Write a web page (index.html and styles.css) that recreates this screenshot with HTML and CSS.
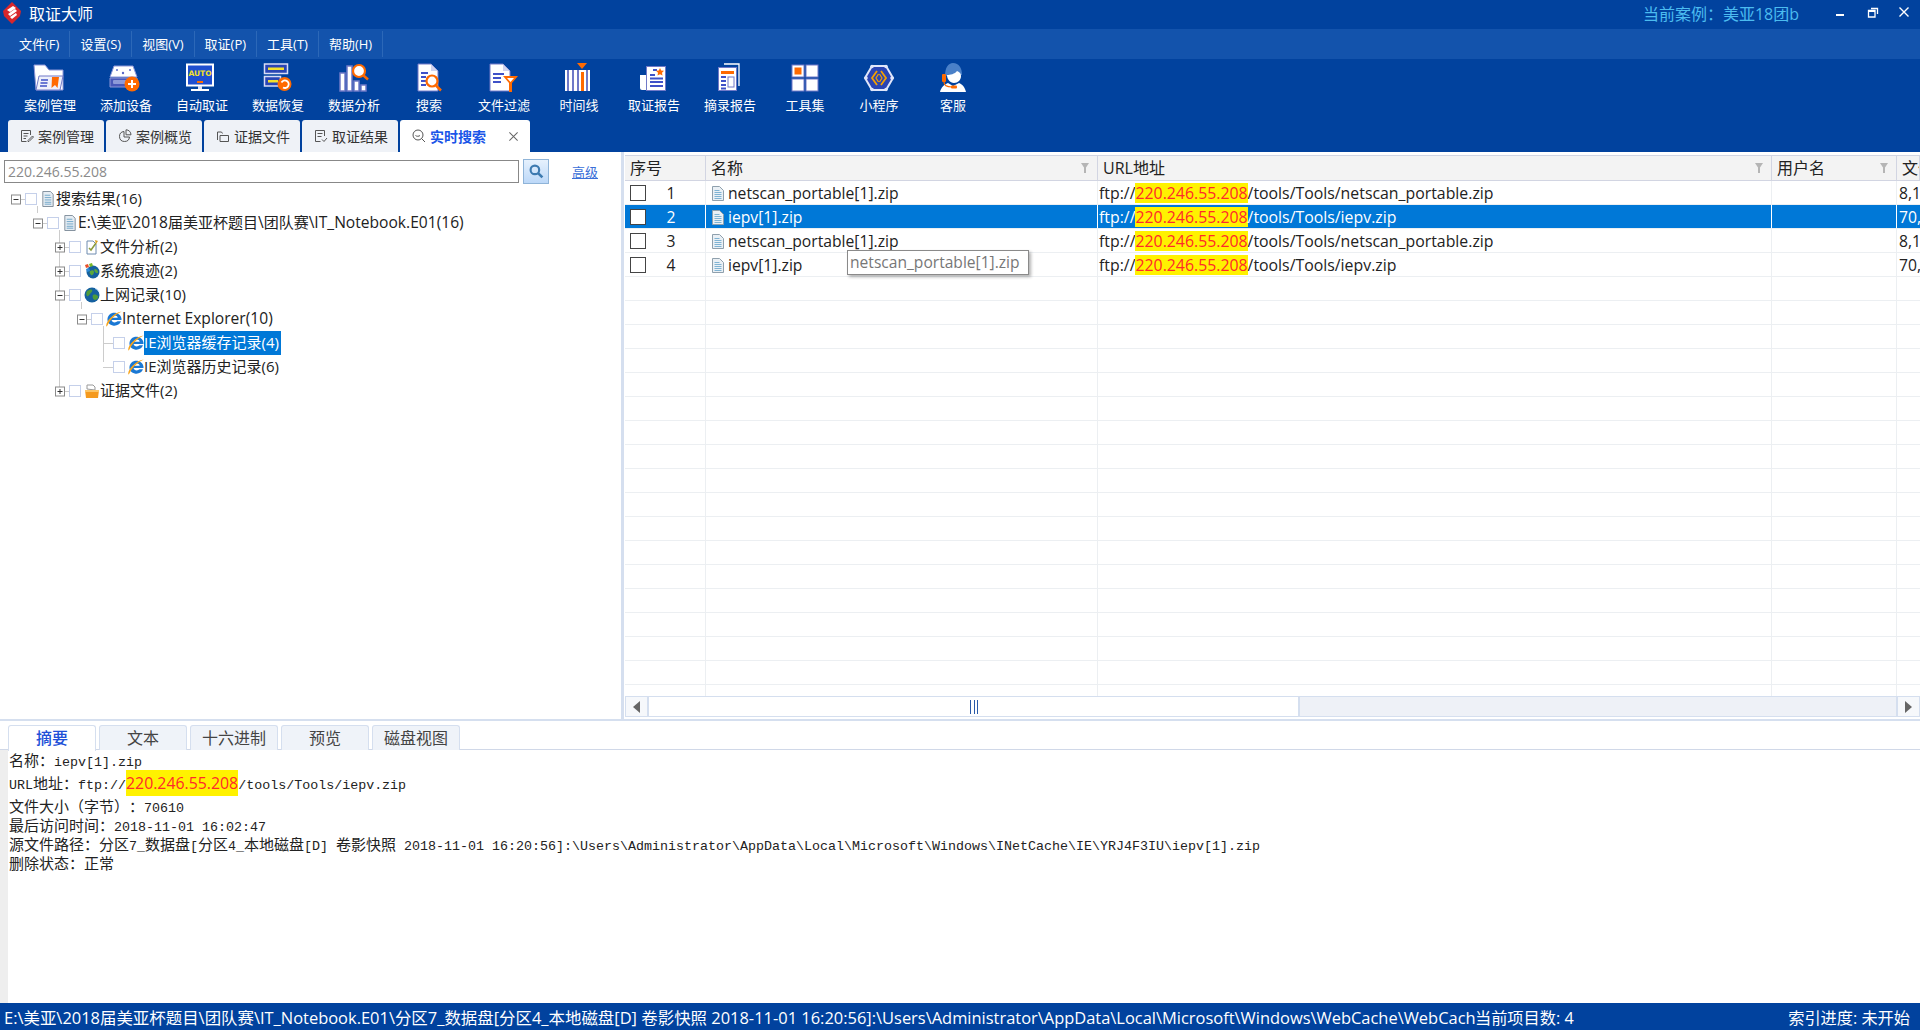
FILE: index.html
```html
<!DOCTYPE html>
<html lang="zh-CN">
<head>
<meta charset="utf-8">
<title>取证大师</title>
<link rel="stylesheet" href="styles.css">
</head>
<body>
<svg class="defs" width="0" height="0">
  <symbol id="minus" viewBox="0 0 14 15"><rect x=".5" y="3" width="9" height="9" fill="#fff" stroke="#8a8a8a"/><path d="M2.500 7.500h5" stroke="#333"/><path d="M10 7.500h4" stroke="#ccc"/></symbol>
  <symbol id="plus" viewBox="0 0 14 15"><rect x=".5" y="3" width="9" height="9" fill="#fff" stroke="#8a8a8a"/><path d="M2.500 7.500h5M5 5v5" stroke="#333"/><path d="M10 7.500h4" stroke="#ccc"/></symbol>
  <symbol id="leaf" viewBox="0 0 14 15"><path d="M4 7.500h10" stroke="#ccc"/></symbol>
  <symbol id="doc" viewBox="0 0 14 17"><path d="M1.500 .5h8l3 3v13h-11z" fill="#e6edf3" stroke="#7d8b99"/><path d="M3.500 4.500h6M3.500 7h7M3.500 9.500h7M3.500 12h7M3.500 14h7" stroke="#6fa5c8"/></symbol>
  <symbol id="ie" viewBox="0 0 16 16"><path d="M15.500 9H5.600c.3 2.500 3.700 3.300 6 1.300h3.400c-1.300 3.400-4.800 5-8.300 4.200C3 13.700.8 10.500 1.600 7 2.400 3.200 6 1 9.500 1.800c3.700.8 6.300 3.500 6 7.200zM5.700 6.700h6C11.400 3.900 6.200 3.900 5.700 6.700z" fill="#1a78d4"/><path d="M.4 15.600C-1 12 6.500 1.800 15.800.5c-6.500 2.800-11.600 8.500-13.600 12.500-.5 1.100-1 2.100-1.800 2.600z" fill="#f7a41c"/></symbol>
  <symbol id="globe" viewBox="0 0 16 16"><circle cx="8" cy="8" r="7.500" fill="#15609f"/><path d="M3 4c2-1 4-2 5-1s-1 3-2 4-2 3-3 2-1-3 0-5zM9 8c2-1 4 0 5 1s-1 4-3 4-3-4-2-5z" fill="#4f9c3a"/><path d="M11 1.500c2 .5 3.500 2 4 3.500" stroke="#bfe2ff" fill="none"/></symbol>
  <symbol id="sys" viewBox="0 0 16 16"><circle cx="9" cy="9" r="6.500" fill="#15609f"/><path d="M6 8c2-1 4-1 4 1s-2 4-3 3-2-3-1-4zM11 6c1 0 3 1 3 3s-2 1-3 0-1-3 0-3z" fill="#5aa83c"/><path d="M1 2l3-1 1 3-3 1z" fill="#e8502a"/><path d="M5 1l3-1 1 3-3 1z" fill="#78b828"/><path d="M2 6l3-1 1 3-3 1z" fill="#2a8ad8"/></symbol>
  <symbol id="file" viewBox="0 0 12 15"><path d="M.5.500h7l4 4v10H.500z" fill="#eaf0f5" stroke="#8fa0ad"/><path d="M2.500 4.500h5M2.500 6.500h7M2.500 8.500h7M2.500 10.500h7M2.500 12.500h7" stroke="#7fb3d3"/></symbol>
  <symbol id="funnel" viewBox="0 0 8 10"><path d="M0 0h8L5 4.500V10H3V4.500z" fill="#b5b5b5"/></symbol>
</svg>

<header class="titlebar">
  <svg class="logo" viewBox="0 0 18 22"><path d="M9 0l9 9-1 5-8 8-8-8-1-5z" fill="#d8262c"/><path d="M4 8l6-4 3 2-6 4zM5 12l7-5 2 2-7 5zM7 15l6-4 1 2-5 4z" fill="#fff"/></svg>
  <span class="apptitle">取证大师</span>
  <span class="spacer"></span>
  <span class="casename">当前案例：美亚18团b</span>
  <svg class="winbtn" viewBox="0 0 12 12"><path d="M2 9h8" stroke="#fff" stroke-width="2"/></svg>
  <svg class="winbtn restore" viewBox="0 0 12 12"><path d="M4 2.500h6.500V8M1.500 4.500h6.500v6.500H1.500z" fill="none" stroke="#fff" stroke-width="1.300"/><path d="M1.500 5h6.500" stroke="#fff" stroke-width="2"/></svg>
  <svg class="winbtn" viewBox="0 0 12 12"><path d="M1.500 1.500l9 9M10.500 1.500l-9 9" stroke="#fff" stroke-width="1.400"/></svg>
</header>

<nav class="menubar">
  <span class="menu">文件(F)</span><span class="menu">设置(S)</span><span class="menu">视图(V)</span><span class="menu">取证(P)</span><span class="menu">工具(T)</span><span class="menu">帮助(H)</span>
</nav>

<section class="toolbar">
  <div class="tool nudge"><svg viewBox="0 0 34 30"><path d="M3 2h11l4 5h14v20H5z" fill="#fff" stroke="#8d96d8"/><path d="M8 13h24l-3 14H5z" fill="#eef0fb" stroke="#7079c8"/><path d="M10 17h7M9.500 20h7M9 23h7" stroke="#3f51c8" stroke-width="1.600"/><path d="M21 14h7l-1.500 11-2.500-3-3.500 3z" fill="#ff6a00"/></svg><span>案例管理</span></div>
  <div class="tool nudge"><svg viewBox="0 0 34 30"><path d="M7 3h19l4 11H3z" fill="#fff" stroke="#8d96d8"/><circle cx="10" cy="7" r="1" fill="#5a68c8"/><circle cx="23" cy="7" r="1" fill="#5a68c8"/><circle cx="16" cy="10" r="1.200" fill="#5a68c8"/><path d="M3 15h27v9H3z" fill="#4a58b8" stroke="#8d96d8"/><rect x="6" y="17" width="14" height="4" rx="1" fill="#8e9ad8"/><circle cx="25" cy="21" r="7.500" fill="#ff6a00"/><path d="M25 17v8M21 21h8" stroke="#fff" stroke-width="2"/></svg><span>添加设备</span></div>
  <div class="tool nudge"><svg viewBox="0 0 34 30"><rect x="4" y="1.500" width="26" height="21" fill="#1e4fd0" stroke="#fff" stroke-width="2"/><text class="autotxt" x="17" y="13" text-anchor="middle">AUTO</text><rect x="14" y="18" width="6" height="2" fill="#ff6a00"/><path d="M15 23h4v3h-4z" fill="#dfe3f7"/><path d="M8 27h18" stroke="#fff" stroke-width="2"/></svg><span>自动取证</span></div>
  <div class="tool"><svg viewBox="0 0 34 30"><rect x="3.500" y="1" width="23" height="9.500" fill="#2a45b5" stroke="#d8dcf5" stroke-width="1.500"/><rect x="7" y="4.500" width="16" height="2.500" fill="#f4e12a"/><rect x="3.500" y="13.500" width="16" height="9.500" fill="#2a45b5" stroke="#d8dcf5" stroke-width="1.500"/><rect x="7" y="17" width="10" height="2.500" fill="#f4e12a"/><circle cx="23.500" cy="21" r="7" fill="#ff6a00"/><path d="M20.500 19.500a3.800 3.800 0 1 1 1.500 5" fill="none" stroke="#fff" stroke-width="1.800"/></svg><span>数据恢复</span></div>
  <div class="tool"><svg viewBox="0 0 34 30"><rect x="3" y="10" width="5" height="18" fill="#fff" stroke="#6f79c8" stroke-width="1.500"/><rect x="10" y="3" width="5" height="25" fill="#fff" stroke="#6f79c8" stroke-width="1.500"/><rect x="17" y="18" width="5" height="10" fill="#fff" stroke="#6f79c8" stroke-width="1.500"/><rect x="24" y="22" width="5" height="6" fill="#fff" stroke="#6f79c8" stroke-width="1.500"/><circle cx="22" cy="8" r="6" fill="#fff" stroke="#ff6a00" stroke-width="2.200"/><path d="M26.500 12.500l4.500 4" stroke="#ff6a00" stroke-width="2.500"/></svg><span>数据分析</span></div>
  <div class="tool narrow"><svg viewBox="0 0 34 30"><path d="M6 1h13l7 7v20H6z" fill="#fff" stroke="#7079c8"/><path d="M19 1v7h7z" fill="#cfd3f0"/><path d="M9 10h7M9 14h5M9 18h5M9 22h5" stroke="#3f51c8" stroke-width="1.800"/><circle cx="20" cy="18" r="5.500" fill="#fff" stroke="#ff6a00" stroke-width="2.200"/><path d="M24 22.500l5 5" stroke="#ff6a00" stroke-width="2.500"/></svg><span>搜索</span></div>
  <div class="tool"><svg viewBox="0 0 34 30"><path d="M3 1h13l7 7v20H3z" fill="#fff" stroke="#7079c8"/><path d="M16 1v7h7z" fill="#cfd3f0"/><path d="M6 11h11M6 15h8M6 19h8" stroke="#3f51c8" stroke-width="1.800"/><path d="M16 13h15l-6 7v9h-3v-9z" fill="#ff6a00"/><path d="M20 15h7l-3.500 4z" fill="#fff"/></svg><span>文件过滤</span></div>
  <div class="tool narrow nudge"><svg viewBox="0 0 34 30"><rect x="5" y="7" width="25" height="21" fill="#fff"/><path d="M8 7v21M13 7v21M18 7v21M27 7v21" stroke="#6f79c8" stroke-width="2"/><path d="M21 9h3v19h-3" fill="#ff6a00"/><path d="M17 0h10l-5 6z" fill="#ff6a00"/></svg><span>时间线</span></div>
  <div class="tool"><svg viewBox="0 0 34 30"><path d="M3 12h6v15H5a2 2 0 0 1-2-2z" fill="#fff"/><rect x="9.500" y="3.500" width="19" height="24" fill="#fff" stroke="#7079c8"/><path d="M16 7h4M13 12h5M13 15.500h13M13 19h13M13 23h13" stroke="#3f51c8" stroke-width="2"/><path d="M23 5l1.200 2.500 2.800.3-2 2 .5 2.700-2.500-1.300-2.500 1.300.5-2.700-2-2 2.800-.3z" fill="#ff6a00"/></svg><span>取证报告</span></div>
  <div class="tool"><svg viewBox="0 0 34 30"><path d="M11 1h15v22" fill="none" stroke="#fff" stroke-width="1.300"/><rect x="5.500" y="4.500" width="18" height="23" fill="#fff" stroke="#7079c8"/><rect x="8" y="8" width="13" height="3" fill="#ff6a00"/><path d="M8 14h5M8 18h5M8 22h5M8 25.500h5" stroke="#3f51c8" stroke-width="2"/><rect x="15" y="14" width="6" height="10" fill="#fff" stroke="#7079c8"/></svg><span>摘录报告</span></div>
  <div class="tool narrow"><svg viewBox="0 0 34 30"><rect x="4" y="2" width="12" height="12" fill="#fff" stroke="#7079c8"/><rect x="6.500" y="4.500" width="7" height="7" fill="#ff6a00"/><rect x="18" y="2" width="12" height="12" fill="#fff" stroke="#7079c8"/><rect x="4" y="16" width="12" height="12" fill="#fff" stroke="#7079c8"/><rect x="18" y="16" width="12" height="12" fill="#fff" stroke="#7079c8"/></svg><span>工具集</span></div>
  <div class="tool narrow"><svg viewBox="0 0 34 30"><path d="M10 3h14l7 12-7 12H10L3 15z" fill="#2a45b5" stroke="#dfe6fa" stroke-width="2"/><circle cx="4" cy="15" r="1.800" fill="#dfe6fa"/><circle cx="30" cy="15" r="1.800" fill="#dfe6fa"/><circle cx="10" cy="3.500" r="1.800" fill="#dfe6fa"/><circle cx="24" cy="3.500" r="1.800" fill="#dfe6fa"/><circle cx="10" cy="26.500" r="1.800" fill="#dfe6fa"/><circle cx="24" cy="26.500" r="1.800" fill="#dfe6fa"/><path d="M15 8l-5 7 5 7M19 8l5 7-5 7" fill="none" stroke="#f5a000" stroke-width="1.800"/><path d="M16.500 11l-2.500 4 2.500 4M17.500 11l2.500 4-2.500 4" fill="none" stroke="#f5a000" stroke-width="1.200"/></svg><span>小程序</span></div>
  <div class="tool narrow"><svg viewBox="0 0 34 30"><path d="M9 13C9 5 12 0 17 0c6 0 9 5 9 12z" fill="#4a80c8"/><path d="M11 12c3 0 8-1 10-4 2 1 4 2 4 5 0 4-3 7-7 7s-7-4-7-8z" fill="#fff"/><path d="M4 29c1-5 5-8 8-9l5 3 6-3c3 1 6 4 7 9z" fill="#fff"/><rect x="6" y="11" width="4" height="8" rx="1" fill="#ff6a00"/><path d="M8 19c0 3 3 5 8 5" fill="none" stroke="#ff6a00" stroke-width="1.200"/><rect x="15" y="22.500" width="6" height="3" rx="1" fill="#ff6a00"/></svg><span>客服</span></div>
</section>

<nav class="tabs">
  <div class="tab"><svg viewBox="0 0 14 14"><path d="M10.500 6V1.500h-9v11h5M3.500 4.500h5M3.500 7h4M3.500 9.500h2.500M8 11.500l4.500-4.500 1 1L9 12.500H8z" fill="none" stroke="#555"/></svg>案例管理</div>
  <div class="tab"><svg viewBox="0 0 14 14"><path d="M6 2.500a5 5 0 1 0 5.500 5.500H6zM8 .8v5h5a5 5 0 0 0-5-5z" fill="none" stroke="#555"/></svg>案例概览</div>
  <div class="tab"><svg viewBox="0 0 14 14"><path d="M1.500 11V3h4l1 1.500M4 12.500V6.500h8.500v6z" fill="none" stroke="#555"/></svg>证据文件</div>
  <div class="tab"><svg viewBox="0 0 14 14"><path d="M10.500 7V1.500h-9v11h5M3.500 4.500h5M3.500 7.500h4M8 10.500l2 2 3-3.500" fill="none" stroke="#555"/></svg>取证结果</div>
  <div class="tab active"><svg viewBox="0 0 14 14"><circle cx="6" cy="6" r="5" fill="none" stroke="#555"/><path d="M3.500 6.500c1 1 3.500 1 4.500 0M9.500 9.500l3.500 3.500" fill="none" stroke="#555"/></svg><span class="tabtext">实时搜索</span><svg class="tabclose" viewBox="0 0 12 12"><path d="M1.500 1.500l9 9M10.500 1.500l-9 9" stroke="#666" stroke-width="1.100"/></svg></div>
</nav>

<main class="main">
  <aside class="leftpane">
    <div class="searchrow">
      <div class="searchinput">220.246.55.208</div>
      <div class="searchbtn"><svg viewBox="0 0 14 14"><circle cx="5.500" cy="5.500" r="4" fill="none" stroke="#3d7ab0" stroke-width="2"/><path d="M8.500 8.500l4 4" stroke="#3d7ab0" stroke-width="2.400"/></svg></div>
      <a class="advlink">高级</a>
    </div>
    <div class="tree">
      <i class="vline v1"></i><i class="vline v2"></i><i class="vline v3"></i><i class="vline v4"></i>
      <div class="node l0"><svg class="exp"><use href="#minus"/></svg><i class="chk"></i><svg class="nicon"><use href="#doc"/></svg><span class="ntext">搜索结果(16)</span></div>
      <div class="node l1"><svg class="exp"><use href="#minus"/></svg><i class="chk"></i><svg class="nicon"><use href="#doc"/></svg><span class="ntext"><span class="lat">E:\</span>美亚<span class="lat">\2018</span>届美亚杯题目<span class="lat">\</span>团队赛<span class="lat">\IT_Notebook.E01(16)</span></span></div>
      <div class="node l2"><svg class="exp"><use href="#plus"/></svg><i class="chk"></i><svg class="nicon" viewBox="0 0 16 16"><path d="M3 2h6l3 3v10H3z" fill="#fff" stroke="#6f8cb0"/><path d="M5 9l2 2 5-7" fill="none" stroke="#8a9a3c" stroke-width="1.500"/><path d="M11 1l3 1-2 3z" fill="#d8a020"/></svg><span class="ntext">文件分析(2)</span></div>
      <div class="node l2"><svg class="exp"><use href="#plus"/></svg><i class="chk"></i><svg class="nicon"><use href="#sys"/></svg><span class="ntext">系统痕迹(2)</span></div>
      <div class="node l2"><svg class="exp"><use href="#minus"/></svg><i class="chk"></i><svg class="nicon"><use href="#globe"/></svg><span class="ntext">上网记录(10)</span></div>
      <div class="node l3"><svg class="exp"><use href="#minus"/></svg><i class="chk"></i><svg class="nicon"><use href="#ie"/></svg><span class="ntext"><span class="lat">Internet Explorer(10)</span></span></div>
      <div class="node l4"><svg class="exp"><use href="#leaf"/></svg><i class="chk"></i><svg class="nicon"><use href="#ie"/></svg><span class="ntext sel">IE浏览器缓存记录(4)</span></div>
      <div class="node l4"><svg class="exp"><use href="#leaf"/></svg><i class="chk"></i><svg class="nicon"><use href="#ie"/></svg><span class="ntext">IE浏览器历史记录(6)</span></div>
      <div class="node l2"><svg class="exp"><use href="#plus"/></svg><i class="chk"></i><svg class="nicon" viewBox="0 0 16 16"><path d="M3 6V2h6l2 2v3z" fill="#fff" stroke="#999"/><path d="M1 7h14l-1 8H2z" fill="#f59a1e"/><path d="M1 7h14v2H1z" fill="#fcc566"/></svg><span class="ntext">证据文件(2)</span></div>
    </div>
  </aside>
  <div class="splitter"></div>
  <section class="rightpane">
    <div class="grid head">
      <div class="cell">序号</div>
      <div class="cell">名称<svg class="filter"><use href="#funnel"/></svg></div>
      <div class="cell">URL地址<svg class="filter"><use href="#funnel"/></svg></div>
      <div class="cell">用户名<svg class="filter"><use href="#funnel"/></svg></div>
      <div class="cell">文件</div>
    </div>
    <div class="rows">
      <div class="grid row"><div class="cell seq"><i class="box"></i><b>1</b></div><div class="cell"><svg class="ficon"><use href="#file"/></svg>netscan_portable[1].zip</div><div class="cell url">ftp://<mark>220.246.55.208</mark>/tools/Tools/netscan_portable.zip</div><div class="cell"></div><div class="cell">8,1</div></div>
      <div class="grid row selected"><div class="cell seq"><i class="box"></i><b>2</b></div><div class="cell"><svg class="ficon"><use href="#file"/></svg>iepv[1].zip</div><div class="cell url">ftp://<mark>220.246.55.208</mark>/tools/Tools/iepv.zip</div><div class="cell"></div><div class="cell">70,</div></div>
      <div class="grid row"><div class="cell seq"><i class="box"></i><b>3</b></div><div class="cell"><svg class="ficon"><use href="#file"/></svg>netscan_portable[1].zip</div><div class="cell url">ftp://<mark>220.246.55.208</mark>/tools/Tools/netscan_portable.zip</div><div class="cell"></div><div class="cell">8,1</div></div>
      <div class="grid row"><div class="cell seq"><i class="box"></i><b>4</b></div><div class="cell"><svg class="ficon"><use href="#file"/></svg>iepv[1].zip</div><div class="cell url">ftp://<mark>220.246.55.208</mark>/tools/Tools/iepv.zip</div><div class="cell"></div><div class="cell">70,</div></div>
      <div class="grid row"><div class="cell"></div><div class="cell"></div><div class="cell"></div><div class="cell"></div><div class="cell"></div></div>
      <div class="grid row"><div class="cell"></div><div class="cell"></div><div class="cell"></div><div class="cell"></div><div class="cell"></div></div>
      <div class="grid row"><div class="cell"></div><div class="cell"></div><div class="cell"></div><div class="cell"></div><div class="cell"></div></div>
      <div class="grid row"><div class="cell"></div><div class="cell"></div><div class="cell"></div><div class="cell"></div><div class="cell"></div></div>
      <div class="grid row"><div class="cell"></div><div class="cell"></div><div class="cell"></div><div class="cell"></div><div class="cell"></div></div>
      <div class="grid row"><div class="cell"></div><div class="cell"></div><div class="cell"></div><div class="cell"></div><div class="cell"></div></div>
      <div class="grid row"><div class="cell"></div><div class="cell"></div><div class="cell"></div><div class="cell"></div><div class="cell"></div></div>
      <div class="grid row"><div class="cell"></div><div class="cell"></div><div class="cell"></div><div class="cell"></div><div class="cell"></div></div>
      <div class="grid row"><div class="cell"></div><div class="cell"></div><div class="cell"></div><div class="cell"></div><div class="cell"></div></div>
      <div class="grid row"><div class="cell"></div><div class="cell"></div><div class="cell"></div><div class="cell"></div><div class="cell"></div></div>
      <div class="grid row"><div class="cell"></div><div class="cell"></div><div class="cell"></div><div class="cell"></div><div class="cell"></div></div>
      <div class="grid row"><div class="cell"></div><div class="cell"></div><div class="cell"></div><div class="cell"></div><div class="cell"></div></div>
      <div class="grid row"><div class="cell"></div><div class="cell"></div><div class="cell"></div><div class="cell"></div><div class="cell"></div></div>
      <div class="grid row"><div class="cell"></div><div class="cell"></div><div class="cell"></div><div class="cell"></div><div class="cell"></div></div>
      <div class="grid row"><div class="cell"></div><div class="cell"></div><div class="cell"></div><div class="cell"></div><div class="cell"></div></div>
      <div class="grid row"><div class="cell"></div><div class="cell"></div><div class="cell"></div><div class="cell"></div><div class="cell"></div></div>
      <div class="grid row"><div class="cell"></div><div class="cell"></div><div class="cell"></div><div class="cell"></div><div class="cell"></div></div>
      <div class="grid row"><div class="cell"></div><div class="cell"></div><div class="cell"></div><div class="cell"></div><div class="cell"></div></div>
    </div>
    <div class="hscroll">
      <div class="sbtn"><i class="arrow-l"></i></div>
      <div class="thumb"><i class="grip"></i></div>
      <div class="track"></div>
      <div class="sbtn"><i class="arrow-r"></i></div>
    </div>
    <div class="tooltip">netscan_portable[1].zip</div>
  </section>
</main>

<section class="bottom">
  <nav class="btabs">
    <div class="btab active">摘要</div><div class="btab">文本</div><div class="btab">十六进制</div><div class="btab">预览</div><div class="btab">磁盘视图</div>
  </nav>
  <div class="summary">
    <p class="sline"><span class="zh">名称：</span>iepv[1].zip</p>
    <p class="sline hl">URL<span class="zh">地址：</span>ftp://<mark>220.246.55.208</mark>/tools/Tools/iepv.zip</p>
    <p class="sline"><span class="zh">文件大小（字节）：</span>70610</p>
    <p class="sline"><span class="zh">最后访问时间：</span>2018-11-01 16:02:47</p>
    <p class="sline"><span class="zh">源文件路径：分区</span>7_<span class="zh">数据盘</span>[<span class="zh">分区</span>4_<span class="zh">本地磁盘</span>[D] <span class="zh">卷影快照</span> 2018-11-01 16:20:56]:\Users\Administrator\AppData\Local\Microsoft\Windows\INetCache\IE\YRJ4F3IU\iepv[1].zip</p>
    <p class="sline"><span class="zh">删除状态：正常</span></p>
  </div>
</section>

<footer class="statusbar">
  <span class="path">E:\美亚\2018届美亚杯题目\团队赛\IT_Notebook.E01\分区7_数据盘[分区4_本地磁盘[D] 卷影快照 2018-11-01 16:20:56]:\Users\Administrator\AppData\Local\Microsoft\Windows\WebCache\WebCacheV01.dat</span>
  <span class="count">当前项目数: 4</span>
  <span class="progress">索引进度: 未开始</span>
</footer>
</body>
</html>
```
FILE: styles.css
```css
* { box-sizing: border-box; }
html, body { margin: 0; height: 100%; overflow: hidden; }
body {
  width: 1920px; height: 1030px;
  display: flex; flex-direction: column;
  font-family: "Open Sans", "Noto Sans CJK SC", sans-serif;
  font-size: 15px; color: #222; background: #fff;
}
.defs { position: absolute; }
.titlebar {
  height: 29px; flex: none; display: flex; align-items: center;
  background: #01429e; color: #fff; padding: 0 0 4px 3px;
}
.logo { width: 18px; height: 22px; }
.apptitle { font-size: 16px; margin-left: 8px; }
.spacer { flex: 1; }
.casename { font-size: 16px; color: #4cbcf0; margin-right: 35px; }
.winbtn { width: 12px; height: 12px; margin-right: 21px; position: relative; top: -1px; }
.winbtn.restore { margin-right: 19px; }
.winbtn:last-child { margin-right: 10px; }
.menubar {
  height: 30px; flex: none; display: flex; align-items: center;
  background: #1353ac; color: #fff; font-size: 13px; padding: 0 0 1px 9px;
}
.menu {
  padding: 0 10px; height: 26px; line-height: 26px;
  border-right: 1px solid #2c68b8; white-space: nowrap;
}
.toolbar {
  height: 61px; flex: none; display: flex; background: #01429e; padding-left: 12px;
}
.tool {
  width: 76px; display: flex; flex-direction: column; align-items: center;
  color: #fff; font-size: 13px; padding-top: 4px;
}
.tool.narrow { width: 74px; }
.tool svg { width: 34px; height: 30px; display: block; }
.tool.nudge svg { margin-right: 4px; }
.tool span { margin-top: 3px; line-height: 18px; white-space: nowrap; }
.autotxt { font: bold 7.5px "DejaVu Sans", sans-serif; fill: #f4e12a; }
.tabs {
  height: 32px; flex: none; display: flex; gap: 2px;
  background: #01429e; padding-left: 8px;
}
.tab {
  width: 96px; height: 32px; display: flex; align-items: center;
  background: #eff2f7; border-radius: 3px 3px 0 0;
  font-size: 14px; color: #333; padding-left: 12px; white-space: nowrap;
}
.tab svg { width: 14px; height: 14px; margin-right: 4px; flex: none; }
.tab.active { width: 130px; background: #fff; }
.tabtext { color: #1a55e8; font-weight: 600; }
.tab svg.tabclose { width: 11px; height: 11px; margin: 0 0 0 auto; position: relative; left: -11px; }
.main { height: 567px; flex: none; display: flex; }
.leftpane { width: 621px; flex: none; padding: 7px 0 0 4px; }
.searchrow { display: flex; align-items: center; height: 25px; }
.searchinput {
  width: 515px; height: 23px; border: 1px solid #888; color: #8a8a8a;
  font-size: 14px; line-height: 21px; padding-left: 3px;
}
.searchbtn {
  width: 26px; height: 25px; margin-left: 4px; display: flex; align-items: center; justify-content: center;
  background: linear-gradient(#e6f1fd, #bcd8f8); border: 1px solid #8fb4d8;
}
.searchbtn svg { width: 15px; height: 15px; }
.advlink { margin-left: 23px; font-size: 13px; color: #3a6fd8; text-decoration: underline; }
.tree { position: relative; margin: 3px 0 0 -4px; }
.vline { position: absolute; width: 1px; background: #ccc; }
.v1 { left: 37px; top: 19px; height: 7px; }
.v2 { left: 59px; top: 43px; height: 157px; }
.v3 { left: 81px; top: 115px; height: 7px; }
.v4 { left: 103px; top: 139px; height: 36px; }
.node { height: 24px; display: flex; align-items: center; white-space: nowrap; position: relative; }
.l0 { padding-left: 11px; } .l1 { padding-left: 33px; } .l2 { padding-left: 55px; }
.l3 { padding-left: 77px; } .l4 { padding-left: 99px; }
.exp { width: 14px; height: 15px; flex: none; }
.chk { width: 12px; height: 12px; border: 1px solid #c5d0ea; background: #fff; flex: none; margin-right: 3px; }
.nicon { width: 16px; height: 16px; flex: none; margin-right: 0; }
.ntext { height: 24px; line-height: 22px; color: #222; }
.lat { font-size: 15.6px; }
.ntext.sel { background: #0078d7; color: #fff; padding-right: 2px; }
.splitter { width: 3px; flex: none; background: #d5dfef; }
.rightpane { width: 1296px; margin-left: 1px; padding-top: 3px; position: relative; display: flex; flex-direction: column; }
.grid { display: grid; grid-template-columns: 81px 392px 674px 125px 1fr; }
.head { height: 26px; background: #f3f3f3; border-top: 1px solid #d2d5e2; border-bottom: 1px solid #d2d5e2; font-size: 16px; flex: none; }
.head .cell { border-right: 1px solid #d2d5e2; padding-left: 5px; line-height: 24px; position: relative; white-space: nowrap; overflow: hidden; }
.filter { position: absolute; right: 8px; top: 7px; width: 8px; height: 10px; }
.rows { height: 515px; overflow: hidden; flex: none; font-size: 15.7px; }
.row { height: 24px; border-bottom: 1px solid #eceff2; }
.row .cell { border-right: 1px solid #eceff2; line-height: 23px; white-space: nowrap; overflow: hidden; display: flex; align-items: center; padding-left: 1px; }
.row .seq { padding-left: 5px; }
.box { width: 16px; height: 16px; border: 1px solid #444; background: #fff; flex: none; }
.seq b { font-weight: 400; width: 12px; margin-left: 19px; text-align: center; padding-top: 1px; }
.ficon { width: 12px; height: 15px; margin: 0 4px 0 5px; flex: none; }
.row .cell:nth-child(2), .row .cell:nth-child(3), .row .cell:nth-child(5) { padding-top: 1px; }
.row .cell:nth-child(5) { padding-left: 2px; border-right: 0; }
.url { font-size: 15.85px; }
mark { background: #fff200; color: #ff2a2a; }
.url mark { line-height: 20px; display: inline-block; height: 20px; }
.selected { background: #0078d7; color: #fff; }
.selected .cell { border-right-color: #fff; }
.selected mark { color: #ff2a2a; }
.hscroll { height: 21px; flex: none; display: flex; border: 1px solid #d5dfef; background: #fff; }
.sbtn { width: 21px; flex: none; background: #f6f8fb; display: flex; align-items: center; justify-content: center; }
.arrow-l { border: 6px solid transparent; border-left: 0; border-right: 7px solid #666; }
.arrow-r { border: 6px solid transparent; border-right: 0; border-left: 7px solid #666; }
.thumb { width: 653px; flex: none; background: #fff; border-left: 2px solid #d5dfef; border-right: 2px solid #d5dfef; display: flex; align-items: center; justify-content: center; }
.grip { width: 8px; height: 14px; border-left: 1px solid #2a5aa8; border-right: 1px solid #2a5aa8; background: linear-gradient(90deg, transparent 2.500px, #2a5aa8 2.500px, #2a5aa8 3.500px, transparent 3.500px); }
.track { flex: 1; background: #eef1f7; border-right: 2px solid #d5dfef; }
.tooltip {
  position: absolute; left: 222px; top: 98px; width: 182px; height: 25px;
  background: #fff; border: 1px solid #8a8a8a; box-shadow: 2px 2px 3px rgba(0,0,0,.3);
  color: #777; font-size: 15.6px; line-height: 22px; padding-left: 2px; white-space: nowrap;
}
.bottom { flex: 1; display: flex; flex-direction: column; border-top: 2px solid #d5dfef; min-height: 0; }
.btabs { height: 29px; flex: none; display: flex; gap: 3px; padding: 4px 0 0 8px; border-bottom: 1px solid #d0d8e8; }
.btab {
  width: 88px; height: 25px; background: #eff3f9; border: 1px solid #d5dfef; border-bottom: 0;
  border-radius: 3px 3px 0 0; text-align: center; font-size: 16px; line-height: 24px; color: #444;
}
.btab.active { background: #fff; color: #2050d8; height: 26px; font-weight: 500; }
.summary {
  flex: 1; margin-left: 8px; box-shadow: -8px 0 0 #eee;
  font-family: "Liberation Mono", "Noto Sans CJK SC", monospace; font-size: 13.33px; color: #222;
}
.sline { margin: 0 0 0 1px; height: 19px; line-height: 19px; white-space: nowrap; }
.sline.hl { height: 26px; line-height: 26px; margin-top: 1px; }
.zh { font-family: "Noto Sans CJK SC", sans-serif; font-size: 15px; text-spacing-trim: space-all; }
.summary mark { font-family: "Open Sans", sans-serif; font-size: 15.85px; display: inline-block; height: 26px; line-height: 26px; }
.statusbar {
  height: 27px; flex: none; display: flex; align-items: center;
  background: #01429e; color: #fff; font-size: 16.2px; padding-left: 4px; white-space: nowrap;
}
.path { width: 1471px; overflow: hidden; flex: none; font-size: 16.45px; }
.count { flex: none; }
.progress { margin-left: auto; margin-right: 10px; }
```
